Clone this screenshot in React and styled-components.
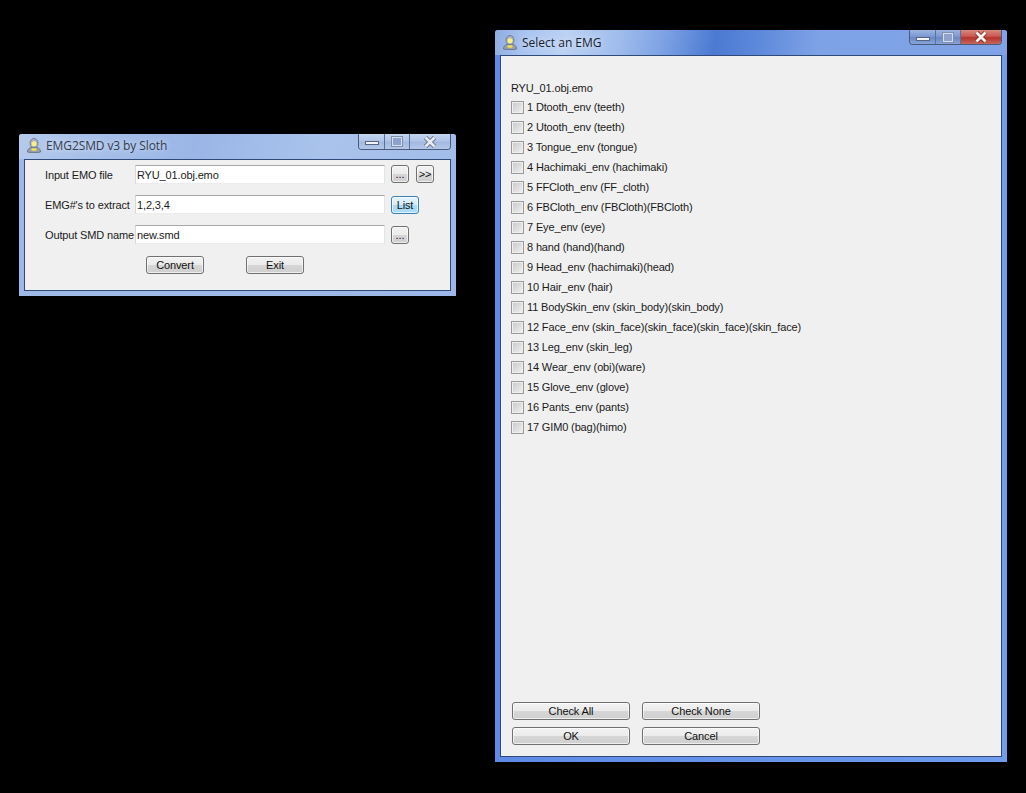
import styled, { createGlobalStyle } from 'styled-components';

const GlobalStyle = createGlobalStyle`
  html, body {
    margin: 0;
    padding: 0;
    background: #000;
  }
  #root {
    width: 1026px;
    height: 793px;
    position: relative;
    overflow: hidden;
    background: #000;
  }
`;

const UI_FONT = `"Liberation Sans", Arial, sans-serif`;

// WINDOW CHROME
const Window = styled.div`
  position: absolute;
  left: ${({ $x }) => $x}px;
  top: ${({ $y }) => $y}px;
  width: ${({ $w }) => $w}px;
  height: ${({ $h }) => $h}px;
  box-sizing: border-box;
  display: flex;
  flex-direction: column;
  padding: 0 5px 5px;
  border-radius: 3px 3px 0 0;
  background: ${({ $active }) =>
    $active
      ? 'linear-gradient(90deg, #5f8be6 0%, #6f9cec 100%)'
      : 'linear-gradient(90deg, #9fb9e6 0%, #9db8e8 100%)'};
`;

const TitleBar = styled.div`
  height: 25px;
  margin: 0 -5px;
  padding: 0 5px 0 7px;
  flex: none;
  display: flex;
  align-items: flex-start;
  border-radius: 3px 3px 0 0;
  background: ${({ $active }) =>
    $active
      ? 'linear-gradient(100deg, #8fabe0 0%, #a9c4f0 6%, #bcd2f4 14%, #a0bdec 24%, #7da2e4 33%, #4c7ad2 43%, #5c88da 51%, #7ea2e6 63%, #7fa3e6 100%)'
      : 'linear-gradient(100deg, #b5cbed 0%, #a9c1e9 14%, #9ab6e6 40%, #a9c3ec 70%, #a3bdea 100%)'};
`;

const TitleIcon = styled.svg`
  width: 16px;
  height: 16px;
  flex: none;
  margin-top: ${({ $active }) => ($active ? 4 : 3)}px;
`;

const TitleText = styled.span`
  margin-left: 4px;
  margin-top: ${({ $active }) => ($active ? 4 : 3)}px;
  font: 12px/17px "Open Sans", sans-serif;
  letter-spacing: ${({ $active }) => ($active ? 0 : -0.1)}px;
  color: ${({ $active }) => ($active ? '#1a2230' : '#333c4c')};
  text-shadow: 0 0 6px rgba(255, 255, 255, 0.75);
  white-space: nowrap;
`;

const CaptionButtons = styled.div`
  display: flex;
  margin-left: auto;
  height: ${({ $active }) => ($active ? 15 : 16)}px;
  width: 93px;
  box-sizing: border-box;
  border: 1px solid #4a5a78;
  border-top: none;
  border-radius: 0 0 4px 4px;
  overflow: hidden;
`;

const CaptionButton = styled.div`
  width: ${({ $wide }) => ($wide ? 43 : 25)}px;
  flex: ${({ $wide }) => ($wide ? '1' : 'none')};
  display: flex;
  align-items: center;
  justify-content: center;
  box-sizing: border-box;
  border-left: ${({ $first }) => ($first ? 'none' : '1px solid #5d7096')};
  background: ${({ $close, $active }) => {
    if ($close && $active) return 'linear-gradient(#d88a80 0%, #c9584f 45%, #b5342c 55%, #c8665a 100%)';
    if ($active) return 'linear-gradient(#9db5e4 0%, #7d99d2 45%, #6a88c4 55%, #86a4dc 100%)';
    return 'linear-gradient(#c3d4ef 0%, #b0c5e8 45%, #a3b9e0 55%, #b3c8ea 100%)';
  }};
`;

const MinGlyph = styled.div`
  width: 14px;
  height: 4px;
  margin-top: 3px;
  background: #f2f4f8;
  border: 1px solid #56647e;
  box-sizing: border-box;
`;

const MaxGlyph = styled.div`
  width: 12px;
  height: 11px;
  box-sizing: border-box;
  border: 2px solid #d4deef;
  outline: 1px solid #7f8fae;
  outline-offset: -1px;
  background: #8ea3cb;
`;

const CloseGlyph = styled.svg`
  width: 14px;
  height: 12px;
  flex: none;
`;

const Client = styled.div`
  flex: 1;
  min-height: 0;
  display: flex;
  flex-direction: column;
  box-sizing: border-box;
  background: #f0f0f0;
  border: 1px solid #2f4a78;
  font: 11px/15px ${UI_FONT};
  letter-spacing: -0.14px;
  color: #1a1a1a;
`;

// SHARED CONTROLS
const Button = styled.div`
  box-sizing: border-box;
  width: ${({ $w }) => $w}px;
  height: 18px;
  flex: none;
  display: flex;
  align-items: center;
  justify-content: center;
  border: 1px solid ${({ $focus }) => ($focus ? '#3c7fb1' : '#707070')};
  border-radius: 3px;
  background: ${({ $focus }) =>
    $focus
      ? 'linear-gradient(#e5f4fc 0%, #d4edfa 48%, #a9dbf6 52%, #a9dbf6 100%)'
      : 'linear-gradient(#f2f2f2 0%, #ebebeb 48%, #d6d6d6 52%, #cfcfcf 100%)'};
  box-shadow: inset 0 0 0 1px rgba(255, 255, 255, 0.65);
  font: 11px/15px ${UI_FONT};
  letter-spacing: -0.12px;
  color: #111;
`;

// MAIN WINDOW
const FormBody = styled.div`
  padding: 5px 0 0 20px;
  display: flex;
  flex-direction: column;
`;

const FormRow = styled.div`
  display: flex;
  align-items: flex-start;
  height: 30px;
`;

const FieldLabel = styled.label`
  width: 90px;
  flex: none;
  margin-top: 3px;
  white-space: nowrap;
`;

const TextField = styled.div`
  box-sizing: border-box;
  width: 250px;
  height: 19px;
  flex: none;
  padding: 0 1px;
  background: #fff;
  border: 1px solid;
  border-color: #a8a8a8 #e4e4e4 #ececec #d8d8d8;
  line-height: 18px;
`;

const RowButtons = styled.div`
  display: flex;
  gap: 7px;
  margin-left: 6px;
  margin-top: ${({ $offset }) => $offset || 0}px;
`;

const FormActions = styled.div`
  display: flex;
  gap: 42px;
  padding-left: 101px;
  margin-top: 1px;
`;

// LIST WINDOW
const ListBody = styled.div`
  flex: 1;
  display: flex;
  flex-direction: column;
  padding: 25px 0 11px 10px;
`;

const FileName = styled.div`
  height: 15px;
  line-height: 15px;
`;

const OptionList = styled.div`
  display: flex;
  flex-direction: column;
  gap: 7px;
  margin-top: 5px;
`;

const Option = styled.div`
  display: flex;
  align-items: center;
  height: 13px;
  white-space: nowrap;
`;

const CheckBox = styled.span`
  box-sizing: border-box;
  width: 13px;
  height: 13px;
  flex: none;
  margin-right: 3px;
  border: 1px solid #999;
  background: linear-gradient(135deg, #c8c8c8 0%, #dedede 55%, #f2f2f2 100%);
  box-shadow: inset 0 0 0 1px #efefef;
`;

const ListActions = styled.div`
  margin-top: auto;
  margin-left: 1px;
  display: grid;
  grid-template-columns: 118px 118px;
  column-gap: 12px;
  row-gap: 7px;
  justify-content: start;
`;

const OPTIONS = [
  '1 Dtooth_env (teeth)',
  '2 Utooth_env (teeth)',
  '3 Tongue_env (tongue)',
  '4 Hachimaki_env (hachimaki)',
  '5 FFCloth_env (FF_cloth)',
  '6 FBCloth_env (FBCloth)(FBCloth)',
  '7 Eye_env (eye)',
  '8 hand (hand)(hand)',
  '9 Head_env (hachimaki)(head)',
  '10 Hair_env (hair)',
  '11 BodySkin_env (skin_body)(skin_body)',
  '12 Face_env (skin_face)(skin_face)(skin_face)(skin_face)',
  '13 Leg_env (skin_leg)',
  '14 Wear_env (obi)(ware)',
  '15 Glove_env (glove)',
  '16 Pants_env (pants)',
  '17 GIM0 (bag)(himo)',
];

const AppIcon = ({ active }) => (
  <TitleIcon $active={active} viewBox="0 0 16 16">
    <path d="M1.5 15c0-3.4 2.6-5 6.5-5s6.5 1.6 6.5 5c-2 .8-11 .8-13 0z" fill="#98a0ad" stroke="#5f6a78" strokeWidth="0.8" />
    <path d="M4 6.5C4 3.5 5.7 1.5 8 1.5s4 2 4 5-1.7 4-4 4-4-1-4-4z" fill="#aab3bf" stroke="#66707e" strokeWidth="0.8" />
    <circle cx="8" cy="6.8" r="2.5" fill="#f9f27c" />
    <rect x="5.5" y="11.2" width="5" height="2.6" rx="1" fill="#f4e04a" />
  </TitleIcon>
);

const AppWindow = ({ x, y, w, h, title, active, children }) => (
  <Window $x={x} $y={y} $w={w} $h={h} $active={active}>
    <TitleBar $active={active}>
      <AppIcon active={active} />
      <TitleText $active={active}>{title}</TitleText>
      <CaptionButtons $active={active}>
        <CaptionButton $first $active={active}><MinGlyph /></CaptionButton>
        <CaptionButton $active={active}><MaxGlyph /></CaptionButton>
        <CaptionButton $wide $close $active={active}>
          <CloseGlyph viewBox="0 0 14 12">
            <path
              d="M2.5 1.5L11.5 10.5M11.5 1.5L2.5 10.5"
              stroke={active ? '#7a2a24' : '#5a6578'}
              strokeWidth="4.4"
            />
            <path
              d="M2.5 1.5L11.5 10.5M11.5 1.5L2.5 10.5"
              stroke={active ? '#fbf4f2' : '#e6ebf3'}
              strokeWidth="2.8"
            />
          </CloseGlyph>
        </CaptionButton>
      </CaptionButtons>
    </TitleBar>
    <Client>{children}</Client>
  </Window>
);

const App = () => (
  <>
    <GlobalStyle />
    <AppWindow x={19} y={134} w={437} h={162} title="EMG2SMD v3 by Sloth">
      <FormBody>
        <FormRow>
          <FieldLabel>Input EMO file</FieldLabel>
          <TextField>RYU_01.obj.emo</TextField>
          <RowButtons>
            <Button $w={18}>...</Button>
            <Button $w={18}>&gt;&gt;</Button>
          </RowButtons>
        </FormRow>
        <FormRow>
          <FieldLabel>EMG#'s to extract</FieldLabel>
          <TextField>1,2,3,4</TextField>
          <RowButtons $offset={1}>
            <Button $w={28} $focus>List</Button>
          </RowButtons>
        </FormRow>
        <FormRow>
          <FieldLabel>Output SMD name</FieldLabel>
          <TextField>new.smd</TextField>
          <RowButtons $offset={1}>
            <Button $w={18}>...</Button>
          </RowButtons>
        </FormRow>
        <FormActions>
          <Button $w={58}>Convert</Button>
          <Button $w={58}>Exit</Button>
        </FormActions>
      </FormBody>
    </AppWindow>

    <AppWindow x={495} y={30} w={512} h={732} title="Select an EMG" active>
      <ListBody>
        <FileName>RYU_01.obj.emo</FileName>
        <OptionList>
          {OPTIONS.map((option) => (
            <Option key={option}>
              <CheckBox />
              {option}
            </Option>
          ))}
        </OptionList>
        <ListActions>
          <Button $w={118}>Check All</Button>
          <Button $w={118}>Check None</Button>
          <Button $w={118}>OK</Button>
          <Button $w={118}>Cancel</Button>
        </ListActions>
      </ListBody>
    </AppWindow>
  </>
);

export default App;
